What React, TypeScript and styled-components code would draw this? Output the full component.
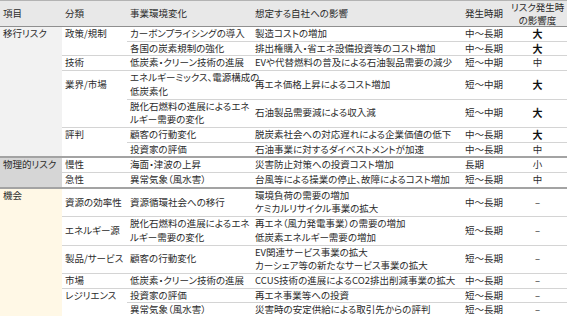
import React from 'react';
import styled, { createGlobalStyle } from 'styled-components';

/* ─────────────────────────── data ─────────────────────────── */
type Tone = 'transition' | 'physical' | 'opportunity';
type Rule = 'none' | 'row' | 'group';

interface Item {
  change: string[];
  impact: string[];
  term: string;
  level: string;
}

interface Category {
  name: string;
  items: Item[];
}

interface Group {
  name: string;
  tone: Tone;
  categories: Category[];
}

const groups: Group[] = [
  {
    name: '移行リスク',
    tone: 'transition',
    categories: [
      {
        name: '政策/規制',
        items: [
          { change: ['カーボンプライシングの導入'], impact: ['製造コストの増加'], term: '中～長期', level: '大' },
          { change: ['各国の炭素規制の強化'], impact: ['排出権購入・省エネ設備投資等のコスト増加'], term: '中～長期', level: '大' },
        ],
      },
      {
        name: '技術',
        items: [
          { change: ['低炭素・クリーン技術の進展'], impact: ['EVや代替燃料の普及による石油製品需要の減少'], term: '短～中期', level: '中' },
        ],
      },
      {
        name: '業界/市場',
        items: [
          { change: ['エネルギーミックス、電源構成の', '低炭素化'], impact: ['再エネ価格上昇によるコスト増加'], term: '短～中期', level: '大' },
          { change: ['脱化石燃料の進展によるエネ', 'ルギー需要の変化'], impact: ['石油製品需要減による収入減'], term: '短～中期', level: '大' },
        ],
      },
      {
        name: '評判',
        items: [
          { change: ['顧客の行動変化'], impact: ['脱炭素社会への対応遅れによる企業価値の低下'], term: '中～長期', level: '大' },
          { change: ['投資家の評価'], impact: ['石油事業に対するダイベストメントが加速'], term: '中～長期', level: '中' },
        ],
      },
    ],
  },
  {
    name: '物理的リスク',
    tone: 'physical',
    categories: [
      {
        name: '慢性',
        items: [{ change: ['海面・津波の上昇'], impact: ['災害防止対策への投資コスト増加'], term: '長期', level: '小' }],
      },
      {
        name: '急性',
        items: [{ change: ['異常気象（風水害）'], impact: ['台風等による操業の停止、故障によるコスト増加'], term: '短～長期', level: '中' }],
      },
    ],
  },
  {
    name: '機会',
    tone: 'opportunity',
    categories: [
      {
        name: '資源の効率性',
        items: [
          { change: ['資源循環社会への移行'], impact: ['環境負荷の需要の増加', 'ケミカルリサイクル事業の拡大'], term: '中～長期', level: '–' },
        ],
      },
      {
        name: 'エネルギー源',
        items: [
          {
            change: ['脱化石燃料の進展によるエネ', 'ルギー需要の変化'],
            impact: ['再エネ（風力発電事業）の需要の増加', '低炭素エネルギー需要の増加'],
            term: '短～長期',
            level: '–',
          },
        ],
      },
      {
        name: '製品/サービス',
        items: [
          { change: ['顧客の行動変化'], impact: ['EV関連サービス事業の拡大', 'カーシェア等の新たなサービス事業の拡大'], term: '短～長期', level: '–' },
        ],
      },
      {
        name: '市場',
        items: [
          { change: ['低炭素・クリーン技術の進展'], impact: ['CCUS技術の進展によるCO2排出削減事業の拡大'], term: '中～長期', level: '–' },
        ],
      },
      {
        name: 'レジリエンス',
        items: [
          { change: ['投資家の評価'], impact: ['再エネ事業等への投資'], term: '短～長期', level: '–' },
          { change: ['異常気象（風水害）'], impact: ['災害時の安定供給による取引先からの評判'], term: '短～長期', level: '–' },
        ],
      },
    ],
  },
];

/* ─────────────────────────── styled components ─────────────────────────── */
const GlobalStyle = createGlobalStyle`
  html, body {
    margin: 0;
    padding: 0;
    background: #ffffff;
  }
  body {
    font-family: "Noto Sans CJK JP", "Noto Sans", sans-serif;
  }
`;

const toneBg: Record<Tone, string> = {
  transition: '#f2f2f2',
  physical: '#d6d6d6',
  opportunity: '#fff8e6',
};

const ruleCss = (rule: Rule) =>
  rule === 'group' ? '2px solid #a3a3a3' : rule === 'row' ? '1px solid #d4d4d4' : '0';

const Table = styled.table`
  width: 567px;
  table-layout: fixed;
  border-collapse: collapse;
  font-size: 9.5px;
  line-height: 13.7px;
  color: #2b2b2b;
  font-feature-settings: "palt";
  border-top: 1px solid #b3b3b3;
  border-bottom: 2px solid #a3a3a3;
`;

const HeadCell = styled.th<{ $center?: boolean }>`
  height: 25px;
  padding: 0 3px;
  background: #e8e8e8;
  font-weight: 400;
  line-height: 12.5px;
  text-align: ${(p) => (p.$center ? 'center' : 'left')};
  vertical-align: middle;
  white-space: nowrap;
  border-bottom: 1px solid #8f8f8f;
`;

const GroupCell = styled.td<{ $tone: Tone; $rule: Rule }>`
  padding: 0 3px;
  background: ${(p) => toneBg[p.$tone]};
  vertical-align: top;
  white-space: nowrap;
  border-top: ${(p) => ruleCss(p.$rule)};
`;

const Cell = styled.td<{ $rule: Rule }>`
  padding: 0 3px;
  vertical-align: middle;
  white-space: nowrap;
  border-top: ${(p) => ruleCss(p.$rule)};
`;

const LevelCell = styled(Cell)<{ $strong: boolean }>`
  text-align: center;
  color: ${(p) => (p.$strong ? '#111111' : '#2b2b2b')};
  font-weight: ${(p) => (p.$strong ? 700 : 400)};
  font-size: ${(p) => (p.$strong ? '10px' : '9.5px')};
`;

const Lines: React.FC<{ lines: string[] }> = ({ lines }) => (
  <>
    {lines.map((l, i) => (
      <React.Fragment key={i}>
        {i > 0 && <br />}
        {l}
      </React.Fragment>
    ))}
  </>
);

/* ───────────────────────────── component ───────────────────────────── */
const App: React.FC = () => (
  <>
    <GlobalStyle />
    <Table>
      <colgroup>
        <col style={{ width: 62 }} />
        <col style={{ width: 65 }} />
        <col style={{ width: 125 }} />
        <col style={{ width: 210 }} />
        <col style={{ width: 46 }} />
        <col style={{ width: 59 }} />
      </colgroup>
      <thead>
        <tr>
          <HeadCell>項目</HeadCell>
          <HeadCell>分類</HeadCell>
          <HeadCell>事業環境変化</HeadCell>
          <HeadCell>想定する自社への影響</HeadCell>
          <HeadCell>発生時期</HeadCell>
          <HeadCell $center>
            リスク発生時
            <br />
            の影響度
          </HeadCell>
        </tr>
      </thead>
      <tbody>
        {groups.map((g, gi) => {
          const rowCount = g.categories.reduce((n, c) => n + c.items.length, 0);
          return g.categories.flatMap((c, ci) =>
            c.items.map((it, ii) => {
              const groupStart = ci === 0 && ii === 0;
              const rule: Rule = groupStart ? (gi === 0 ? 'none' : 'group') : 'row';
              return (
                <tr key={`${gi}-${ci}-${ii}`}>
                  {groupStart && (
                    <GroupCell rowSpan={rowCount} $tone={g.tone} $rule={rule}>
                      {g.name}
                    </GroupCell>
                  )}
                  <Cell $rule={ii === 0 ? rule : 'none'}>{ii === 0 ? c.name : ''}</Cell>
                  <Cell $rule={rule}>
                    <Lines lines={it.change} />
                  </Cell>
                  <Cell $rule={rule}>
                    <Lines lines={it.impact} />
                  </Cell>
                  <Cell $rule={rule}>{it.term}</Cell>
                  <LevelCell $rule={rule} $strong={it.level === '大'}>
                    {it.level}
                  </LevelCell>
                </tr>
              );
            })
          );
        })}
      </tbody>
    </Table>
  </>
);

export default App;
